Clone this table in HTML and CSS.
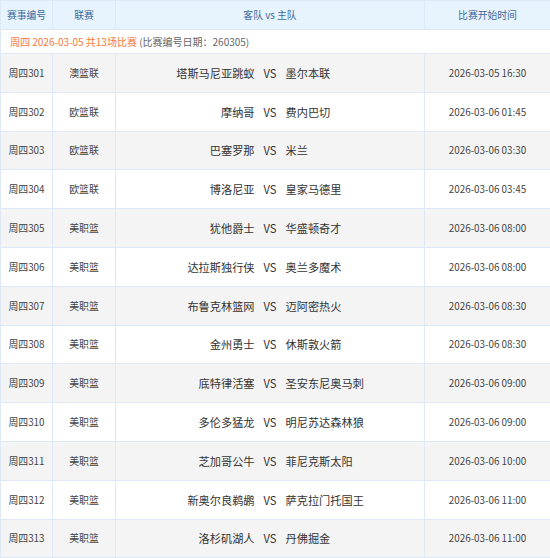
FILE: index.html
```html
<!DOCTYPE html>
<html lang="zh-CN">
<head>
<meta charset="utf-8">
<title>赛事列表</title>
<link rel="stylesheet" href="styles.css">
</head>
<body>
<table class="match-table">
  <colgroup>
    <col class="c-no"><col class="c-league"><col class="c-teams"><col class="c-time">
  </colgroup>
  <thead>
    <tr class="head">
      <th>赛事编号</th><th>联赛</th><th>客队 vs 主队</th><th>比赛开始时间</th>
    </tr>
  </thead>
  <tbody>
    <tr class="date-row">
      <td colspan="4"><span class="hl">周四 2026-03-05 共13场比赛</span> <span class="sub">(比赛编号日期：260305)</span></td>
    </tr>
    <tr class="odd"><td class="sm">周四301</td><td class="sm">澳篮联</td><td class="teams"><div class="vs-wrap"><span class="away">塔斯马尼亚跳蚁</span><span class="vs">VS</span><span class="home">墨尔本联</span></div></td><td class="sm">2026-03-05 16:30</td></tr>
    <tr class="even"><td class="sm">周四302</td><td class="sm">欧篮联</td><td class="teams"><div class="vs-wrap"><span class="away">摩纳哥</span><span class="vs">VS</span><span class="home">费内巴切</span></div></td><td class="sm">2026-03-06 01:45</td></tr>
    <tr class="odd"><td class="sm">周四303</td><td class="sm">欧篮联</td><td class="teams"><div class="vs-wrap"><span class="away">巴塞罗那</span><span class="vs">VS</span><span class="home">米兰</span></div></td><td class="sm">2026-03-06 03:30</td></tr>
    <tr class="even"><td class="sm">周四304</td><td class="sm">欧篮联</td><td class="teams"><div class="vs-wrap"><span class="away">博洛尼亚</span><span class="vs">VS</span><span class="home">皇家马德里</span></div></td><td class="sm">2026-03-06 03:45</td></tr>
    <tr class="odd"><td class="sm">周四305</td><td class="sm">美职篮</td><td class="teams"><div class="vs-wrap"><span class="away">犹他爵士</span><span class="vs">VS</span><span class="home">华盛顿奇才</span></div></td><td class="sm">2026-03-06 08:00</td></tr>
    <tr class="even"><td class="sm">周四306</td><td class="sm">美职篮</td><td class="teams"><div class="vs-wrap"><span class="away">达拉斯独行侠</span><span class="vs">VS</span><span class="home">奥兰多魔术</span></div></td><td class="sm">2026-03-06 08:00</td></tr>
    <tr class="odd"><td class="sm">周四307</td><td class="sm">美职篮</td><td class="teams"><div class="vs-wrap"><span class="away">布鲁克林篮网</span><span class="vs">VS</span><span class="home">迈阿密热火</span></div></td><td class="sm">2026-03-06 08:30</td></tr>
    <tr class="even"><td class="sm">周四308</td><td class="sm">美职篮</td><td class="teams"><div class="vs-wrap"><span class="away">金州勇士</span><span class="vs">VS</span><span class="home">休斯敦火箭</span></div></td><td class="sm">2026-03-06 08:30</td></tr>
    <tr class="odd"><td class="sm">周四309</td><td class="sm">美职篮</td><td class="teams"><div class="vs-wrap"><span class="away">底特律活塞</span><span class="vs">VS</span><span class="home">圣安东尼奥马刺</span></div></td><td class="sm">2026-03-06 09:00</td></tr>
    <tr class="even"><td class="sm">周四310</td><td class="sm">美职篮</td><td class="teams"><div class="vs-wrap"><span class="away">多伦多猛龙</span><span class="vs">VS</span><span class="home">明尼苏达森林狼</span></div></td><td class="sm">2026-03-06 09:00</td></tr>
    <tr class="odd"><td class="sm">周四311</td><td class="sm">美职篮</td><td class="teams"><div class="vs-wrap"><span class="away">芝加哥公牛</span><span class="vs">VS</span><span class="home">菲尼克斯太阳</span></div></td><td class="sm">2026-03-06 10:00</td></tr>
    <tr class="even"><td class="sm">周四312</td><td class="sm">美职篮</td><td class="teams"><div class="vs-wrap"><span class="away">新奥尔良鹈鹕</span><span class="vs">VS</span><span class="home">萨克拉门托国王</span></div></td><td class="sm">2026-03-06 11:00</td></tr>
    <tr class="odd"><td class="sm">周四313</td><td class="sm">美职篮</td><td class="teams"><div class="vs-wrap"><span class="away">洛杉矶湖人</span><span class="vs">VS</span><span class="home">丹佛掘金</span></div></td><td class="sm">2026-03-06 11:00</td></tr>
  </tbody>
</table>
</body>
</html>
```
FILE: styles.css
```css
html, body {
  margin: 0;
  padding: 0;
  background: #ffffff;
}
body {
  font-family: "Noto Sans CJK SC", "Noto Sans", sans-serif;
  color: #333333;
}
.match-table {
  border-collapse: collapse;
  table-layout: fixed;
  width: 550px;
}
.c-no { width: 52px; }
.c-league { width: 63px; }
.c-teams { width: 309px; }
.c-time { width: 126px; }
.match-table th,
.match-table td {
  border: 1px solid #dde9f4;
  padding: 0;
  text-align: center;
  vertical-align: middle;
  white-space: nowrap;
  overflow: hidden;
}
.head th {
  height: 28px;
  background: #e7f4fd;
  color: #3d6a9e;
  font-weight: normal;
  font-size: 9.8px;
}
.date-row td {
  height: 23px;
  text-align: left;
  padding-left: 9px;
  font-size: 10px;
  background: #ffffff;
}
.hl { color: #f5793a; }
.sub { color: #666666; }
tr.odd td { background: #f4f4f4; height: 37.8px; }
tr.even td { background: #ffffff; height: 37.8px; }
.sm {
  font-size: 9.9px;
  color: #444444;
}
.teams {
  font-size: 11.2px;
  color: #333333;
}
.vs-wrap {
  display: flex;
  align-items: center;
}
.away {
  flex: 1;
  text-align: right;
}
.home {
  flex: 1;
  text-align: left;
}
.vs {
  padding: 0 9px;
}
```
